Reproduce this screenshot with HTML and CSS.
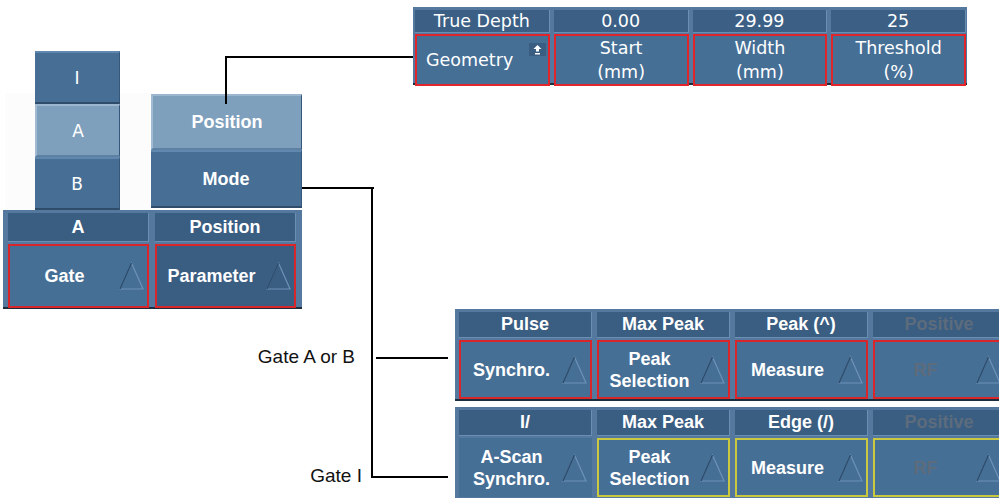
FILE: index.html
```html
<!DOCTYPE html>
<html lang="en">
<head>
    <meta charset="utf-8">
    <title>Gate Position / Mode</title>
    <link rel="stylesheet" href="styles.css">
</head>
<body>
    <div class="canvas">
        <div class="shade"></div>

        <!-- gate geometry toolbar -->
        <div class="top-bar">
            <div class="tcol">
                <div class="thd">True Depth</div>
                <div class="tcell geo">
                    <span>Geometry</span>
                    <svg class="geo-ico" width="17" height="13" viewBox="0 0 17 13">
                        <rect width="17" height="13" fill="#3a5d82"/>
                        <polygon points="8.5,2 12.5,6 10,6 10,8.5 7,8.5 7,6 4.5,6" fill="#fff"/>
                        <rect x="6" y="10" width="5" height="1.5" fill="#fff"/>
                    </svg>
                </div>
            </div>
            <div class="tcol">
                <div class="thd">0.00</div>
                <div class="tcell"><span>Start</span><span>(mm)</span></div>
            </div>
            <div class="tcol">
                <div class="thd">29.99</div>
                <div class="tcell"><span>Width</span><span>(mm)</span></div>
            </div>
            <div class="tcol">
                <div class="thd">25</div>
                <div class="tcell"><span>Threshold</span><span>(%)</span></div>
            </div>
        </div>

        <!-- gate selection -->
        <div class="gate-list">
            <div class="mbtn">I</div>
            <div class="mbtn on">A</div>
            <div class="mbtn">B</div>
        </div>

        <div class="pos-list">
            <div class="pbtn on">Position</div>
            <div class="pbtn mode">Mode</div>
        </div>

        <div class="gate-panel">
            <div class="gcol">
                <div class="hd">A</div>
                <div class="cell red">
                    <span class="txt">Gate</span>
                    <svg class="tri" width="25" height="28" viewBox="0 0 25 28"><polygon points="12.5,1 1,27 24,27" fill="none" stroke="#6d92b8" stroke-width="1.2"/><polyline points="1,27 12.5,1" fill="none" stroke="#2b4a69" stroke-width="1.4"/></svg>
                </div>
            </div>
            <div class="gcol">
                <div class="hd">Position</div>
                <div class="cell red dark">
                    <span class="txt">Parameter</span>
                    <svg class="tri" width="25" height="28" viewBox="0 0 25 28"><polygon points="12.5,1 1,27 24,27" fill="none" stroke="#6d92b8" stroke-width="1.2"/><polyline points="1,27 12.5,1" fill="none" stroke="#2b4a69" stroke-width="1.4"/></svg>
                </div>
            </div>
        </div>

        <!-- mode, gate A or B -->
        <div class="panel panel-ab">
            <div class="pcol">
                <div class="hd">Pulse</div>
                <div class="cell red">
                    <span class="txt">Synchro.</span>
                    <svg class="tri" width="25" height="28" viewBox="0 0 25 28"><polygon points="12.5,1 1,27 24,27" fill="none" stroke="#6d92b8" stroke-width="1.2"/><polyline points="1,27 12.5,1" fill="none" stroke="#2b4a69" stroke-width="1.4"/></svg>
                </div>
            </div>
            <div class="pcol">
                <div class="hd">Max Peak</div>
                <div class="cell red">
                    <span class="txt">Peak<br>Selection</span>
                    <svg class="tri" width="25" height="28" viewBox="0 0 25 28"><polygon points="12.5,1 1,27 24,27" fill="none" stroke="#6d92b8" stroke-width="1.2"/><polyline points="1,27 12.5,1" fill="none" stroke="#2b4a69" stroke-width="1.4"/></svg>
                </div>
            </div>
            <div class="pcol">
                <div class="hd">Peak (^)</div>
                <div class="cell red">
                    <span class="txt">Measure</span>
                    <svg class="tri" width="25" height="28" viewBox="0 0 25 28"><polygon points="12.5,1 1,27 24,27" fill="none" stroke="#6d92b8" stroke-width="1.2"/><polyline points="1,27 12.5,1" fill="none" stroke="#2b4a69" stroke-width="1.4"/></svg>
                </div>
            </div>
            <div class="pcol">
                <div class="hd off">Positive</div>
                <div class="cell red">
                    <span class="txt off">RF</span>
                    <svg class="tri" width="25" height="28" viewBox="0 0 25 28"><polygon points="12.5,1 1,27 24,27" fill="none" stroke="#6d92b8" stroke-width="1.2"/><polyline points="1,27 12.5,1" fill="none" stroke="#2b4a69" stroke-width="1.4"/></svg>
                </div>
            </div>
        </div>

        <!-- mode, gate I -->
        <div class="panel panel-i">
            <div class="pcol">
                <div class="hd">I/</div>
                <div class="cell plain">
                    <span class="txt">A-Scan<br>Synchro.</span>
                    <svg class="tri" width="25" height="28" viewBox="0 0 25 28"><polygon points="12.5,1 1,27 24,27" fill="none" stroke="#6d92b8" stroke-width="1.2"/><polyline points="1,27 12.5,1" fill="none" stroke="#2b4a69" stroke-width="1.4"/></svg>
                </div>
            </div>
            <div class="pcol">
                <div class="hd">Max Peak</div>
                <div class="cell yel">
                    <span class="txt">Peak<br>Selection</span>
                    <svg class="tri" width="25" height="28" viewBox="0 0 25 28"><polygon points="12.5,1 1,27 24,27" fill="none" stroke="#6d92b8" stroke-width="1.2"/><polyline points="1,27 12.5,1" fill="none" stroke="#2b4a69" stroke-width="1.4"/></svg>
                </div>
            </div>
            <div class="pcol">
                <div class="hd">Edge (/)</div>
                <div class="cell yel">
                    <span class="txt">Measure</span>
                    <svg class="tri" width="25" height="28" viewBox="0 0 25 28"><polygon points="12.5,1 1,27 24,27" fill="none" stroke="#6d92b8" stroke-width="1.2"/><polyline points="1,27 12.5,1" fill="none" stroke="#2b4a69" stroke-width="1.4"/></svg>
                </div>
            </div>
            <div class="pcol">
                <div class="hd off">Positive</div>
                <div class="cell yel">
                    <span class="txt off">RF</span>
                    <svg class="tri" width="25" height="28" viewBox="0 0 25 28"><polygon points="12.5,1 1,27 24,27" fill="none" stroke="#6d92b8" stroke-width="1.2"/><polyline points="1,27 12.5,1" fill="none" stroke="#2b4a69" stroke-width="1.4"/></svg>
                </div>
            </div>
        </div>

        <!-- callout lines -->
        <div class="ln ln-pos-v"></div>
        <div class="ln ln-pos-h"></div>
        <div class="ln ln-mode-h"></div>
        <div class="ln ln-mode-v"></div>
        <div class="ln ln-ab"></div>
        <div class="ln ln-i"></div>

        <div class="label label-ab">Gate A or B</div>
        <div class="label label-i">Gate I</div>
    </div>
</body>
</html>
```

FILE: styles.css
```css
body {
    margin: 0;
    background: #ffffff;
    font-family: "Liberation Sans", Arial, sans-serif;
}

.canvas {
    position: relative;
    width: 999px;
    height: 498px;
    overflow: hidden;
}

.shade {
    position: absolute;
    left: 5px;
    top: 93px;
    width: 146px;
    height: 117px;
    background: #fcfcfc;
}

/* ---- top toolbar ---- */

.top-bar {
    position: absolute;
    left: 413px;
    top: 7px;
    width: 554px;
    height: 78px;
    box-sizing: border-box;
    padding: 3px 1px 0 2px;
    background: #55799e;
    border-bottom: 2px solid #1e2d3c;
    display: grid;
    grid-template-columns: repeat(4, 1fr);
    gap: 4px;
}

.tcol {
    display: flex;
    flex-direction: column;
    gap: 1px;
}

.thd {
    height: 22px;
    line-height: 22px;
    background: #3b5f85;
    border-bottom: 1px solid #6b8fb3;
    border-right: 1px solid #6b8fb3;
    color: #ffffff;
    font-family: "DejaVu Sans", Verdana, sans-serif;
    font-size: 17.5px;
    text-align: center;
}

.tcell {
    flex: 1;
    border: 2px solid #e0262a;
    background: #466f96;
    color: #ffffff;
    font-family: "DejaVu Sans", Verdana, sans-serif;
    font-size: 17.5px;
    line-height: 24px;
    display: flex;
    flex-direction: column;
    align-items: center;
    justify-content: center;
}

.tcell.geo {
    position: relative;
    align-items: flex-start;
    padding-left: 9px;
}

.geo-ico {
    position: absolute;
    right: 2px;
    top: 7px;
}

/* ---- left menus ---- */

.gate-list {
    position: absolute;
    left: 35px;
    top: 51px;
    width: 85px;
    display: flex;
    flex-direction: column;
}

.mbtn {
    height: 53px;
    box-sizing: border-box;
    background: #476f95;
    border-top: 2px solid #6088ae;
    border-bottom: 2px solid #2f4d6b;
    border-right: 1px solid #35577a;
    color: #ffffff;
    font-family: "DejaVu Sans", Verdana, sans-serif;
    font-size: 17px;
    display: flex;
    align-items: center;
    justify-content: center;
}

.mbtn.on,
.pbtn.on {
    background: #7fa0bd;
    border-top-color: #9bb6ce;
    border-bottom-color: #5d80a3;
    border-left: 2px solid #a3bbd2;
}

.pos-list {
    position: absolute;
    left: 151px;
    top: 94px;
    width: 151px;
    display: flex;
    flex-direction: column;
}

.pbtn {
    height: 56px;
    box-sizing: border-box;
    background: #476f95;
    border-top: 2px solid #6088ae;
    border-bottom: 2px solid #2f4d6b;
    border-right: 1px solid #35577a;
    color: #ffffff;
    font-size: 18px;
    font-weight: bold;
    display: flex;
    align-items: center;
    justify-content: center;
}

.pbtn.mode {
    height: 58px;
}

/* ---- panels ---- */

.gate-panel,
.panel {
    position: absolute;
    box-sizing: border-box;
    background: #55799e;
    border-bottom: 2px solid #1e2d3c;
    display: grid;
    color: #ffffff;
    font-size: 18px;
    font-weight: bold;
}

.gate-panel {
    left: 3px;
    top: 210px;
    width: 299px;
    height: 99px;
    padding: 3px 5px 0 5px;
    grid-template-columns: 141px 141px;
    gap: 6px;
}

.panel {
    left: 455px;
    width: 560px;
    padding: 3px 0 0 4px;
    grid-template-columns: repeat(4, 133px);
    gap: 5px;
}

.panel-ab {
    top: 309px;
    height: 92px;
}

.panel-i {
    top: 407px;
    height: 100px;
}

.gcol,
.pcol {
    display: flex;
    flex-direction: column;
    gap: 2px;
}

.hd {
    height: 25px;
    line-height: 25px;
    background: #3a5d82;
    border-bottom: 1px solid #6b8fb3;
    border-right: 1px solid #6b8fb3;
    text-align: center;
}

.gcol .hd {
    height: 28px;
    line-height: 28px;
}

.hd.off,
.txt.off {
    color: #5c6c7c;
}

.cell {
    height: 59px;
    box-sizing: border-box;
    background: #466f96;
    border: 2px solid transparent;
    display: flex;
    align-items: center;
    padding-right: 3px;
}

.gcol .cell {
    height: 64px;
}

.cell.red {
    border-color: #d8262b;
}

.cell.yel {
    border-color: #c9c83e;
}

.cell.dark {
    background: #3a5d82;
}

.txt {
    flex: 1;
    text-align: center;
    line-height: 22px;
}

.tri {
    flex: none;
}

/* ---- callout lines ---- */

.ln {
    position: absolute;
    background: #000000;
}

.ln-pos-v {
    left: 225px;
    top: 56px;
    width: 2px;
    height: 48px;
}

.ln-pos-h {
    left: 225px;
    top: 56px;
    width: 188px;
    height: 2px;
}

.ln-mode-h {
    left: 302px;
    top: 187px;
    width: 72px;
    height: 2px;
}

.ln-mode-v {
    left: 371px;
    top: 187px;
    width: 2px;
    height: 291px;
}

.ln-ab {
    left: 376px;
    top: 357px;
    width: 72px;
    height: 2px;
}

.ln-i {
    left: 371px;
    top: 476px;
    width: 77px;
    height: 2px;
}

.label {
    position: absolute;
    color: #111111;
    font-size: 19px;
    line-height: 22px;
    text-align: right;
}

.label-ab {
    right: 644px;
    top: 346px;
}

.label-i {
    right: 637px;
    top: 465px;
}
```
